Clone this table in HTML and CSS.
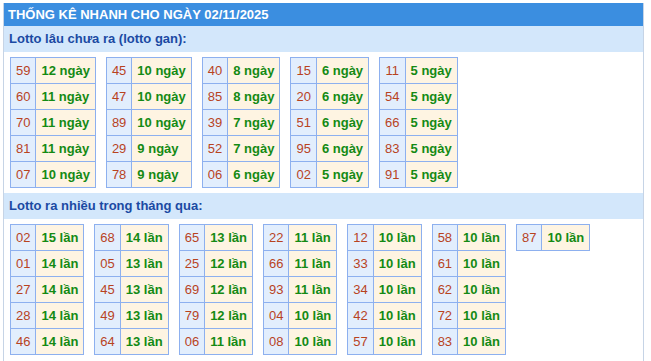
FILE: index.html
```html
<!DOCTYPE html>
<html lang="vi">
<head>
<meta charset="utf-8">
<title>Thống kê nhanh</title>
<link rel="stylesheet" href="styles.css">
</head>
<body>
<div class="panel">
  <div class="title">THỐNG KÊ NHANH CHO NGÀY 02/11/2025</div>
  <div class="sub">Lotto lâu chưa ra (lotto gan):</div>
  <div class="boxes">
    <table class="box"><tr><td class="n">59</td><td class="v">12 ngày</td></tr><tr><td class="n">60</td><td class="v">11 ngày</td></tr><tr><td class="n">70</td><td class="v">11 ngày</td></tr><tr><td class="n">81</td><td class="v">11 ngày</td></tr><tr><td class="n">07</td><td class="v">10 ngày</td></tr></table>
    <table class="box"><tr><td class="n">45</td><td class="v">10 ngày</td></tr><tr><td class="n">47</td><td class="v">10 ngày</td></tr><tr><td class="n">89</td><td class="v">10 ngày</td></tr><tr><td class="n">29</td><td class="v">9 ngày</td></tr><tr><td class="n">78</td><td class="v">9 ngày</td></tr></table>
    <table class="box"><tr><td class="n">40</td><td class="v">8 ngày</td></tr><tr><td class="n">85</td><td class="v">8 ngày</td></tr><tr><td class="n">39</td><td class="v">7 ngày</td></tr><tr><td class="n">52</td><td class="v">7 ngày</td></tr><tr><td class="n">06</td><td class="v">6 ngày</td></tr></table>
    <table class="box"><tr><td class="n">15</td><td class="v">6 ngày</td></tr><tr><td class="n">20</td><td class="v">6 ngày</td></tr><tr><td class="n">51</td><td class="v">6 ngày</td></tr><tr><td class="n">95</td><td class="v">6 ngày</td></tr><tr><td class="n">02</td><td class="v">5 ngày</td></tr></table>
    <table class="box"><tr><td class="n">11</td><td class="v">5 ngày</td></tr><tr><td class="n">54</td><td class="v">5 ngày</td></tr><tr><td class="n">66</td><td class="v">5 ngày</td></tr><tr><td class="n">83</td><td class="v">5 ngày</td></tr><tr><td class="n">91</td><td class="v">5 ngày</td></tr></table>
  </div>
  <div class="sub">Lotto ra nhiều trong tháng qua:</div>
  <div class="boxes">
    <table class="box"><tr><td class="n">02</td><td class="v">15 lần</td></tr><tr><td class="n">01</td><td class="v">14 lần</td></tr><tr><td class="n">27</td><td class="v">14 lần</td></tr><tr><td class="n">28</td><td class="v">14 lần</td></tr><tr><td class="n">46</td><td class="v">14 lần</td></tr></table>
    <table class="box"><tr><td class="n">68</td><td class="v">14 lần</td></tr><tr><td class="n">05</td><td class="v">13 lần</td></tr><tr><td class="n">45</td><td class="v">13 lần</td></tr><tr><td class="n">49</td><td class="v">13 lần</td></tr><tr><td class="n">64</td><td class="v">13 lần</td></tr></table>
    <table class="box"><tr><td class="n">65</td><td class="v">13 lần</td></tr><tr><td class="n">25</td><td class="v">12 lần</td></tr><tr><td class="n">69</td><td class="v">12 lần</td></tr><tr><td class="n">79</td><td class="v">12 lần</td></tr><tr><td class="n">06</td><td class="v">11 lần</td></tr></table>
    <table class="box"><tr><td class="n">22</td><td class="v">11 lần</td></tr><tr><td class="n">66</td><td class="v">11 lần</td></tr><tr><td class="n">93</td><td class="v">11 lần</td></tr><tr><td class="n">04</td><td class="v">10 lần</td></tr><tr><td class="n">08</td><td class="v">10 lần</td></tr></table>
    <table class="box"><tr><td class="n">12</td><td class="v">10 lần</td></tr><tr><td class="n">33</td><td class="v">10 lần</td></tr><tr><td class="n">34</td><td class="v">10 lần</td></tr><tr><td class="n">42</td><td class="v">10 lần</td></tr><tr><td class="n">57</td><td class="v">10 lần</td></tr></table>
    <table class="box"><tr><td class="n">58</td><td class="v">10 lần</td></tr><tr><td class="n">61</td><td class="v">10 lần</td></tr><tr><td class="n">62</td><td class="v">10 lần</td></tr><tr><td class="n">72</td><td class="v">10 lần</td></tr><tr><td class="n">83</td><td class="v">10 lần</td></tr></table>
    <table class="box"><tr><td class="n">87</td><td class="v">10 lần</td></tr></table>
  </div>
</div>
</body>
</html>
```
FILE: styles.css
```css
html, body {
  margin: 0;
  padding: 0;
  background: #ffffff;
}
body {
  font-family: "Liberation Sans", Arial, sans-serif;
  font-size: 13px;
}
.panel {
  margin: 3px 0 0 3px;
  width: 639px;
  border-left: 1px solid #c6d4e6;
  border-right: 1px solid #c6d4e6;
  padding-bottom: 20px;
}
.title {
  background: #3b8ee0;
  color: #ffffff;
  font-weight: bold;
  font-size: 13px;
  line-height: 23px;
  padding-left: 4px;
}
.sub {
  background: #d3e7fb;
  color: #1b4aa3;
  font-weight: bold;
  font-size: 13px;
  line-height: 26px;
  padding-left: 5px;
}
.boxes {
  display: flex;
  flex-wrap: wrap;
  align-items: flex-start;
  gap: 10px;
  padding: 5px 6px;
}
.box {
  border-collapse: collapse;
}
.box td {
  border: 1px solid #8db0ef;
  padding: 4px 5px;
  line-height: 17px;
  font-size: 13px;
  white-space: nowrap;
}
.box td.n {
  background: #e2eefd;
  color: #b8431f;
  text-align: center;
}
.box td.v {
  background: #fef4e2;
  color: #148a14;
  font-weight: bold;
}
```
